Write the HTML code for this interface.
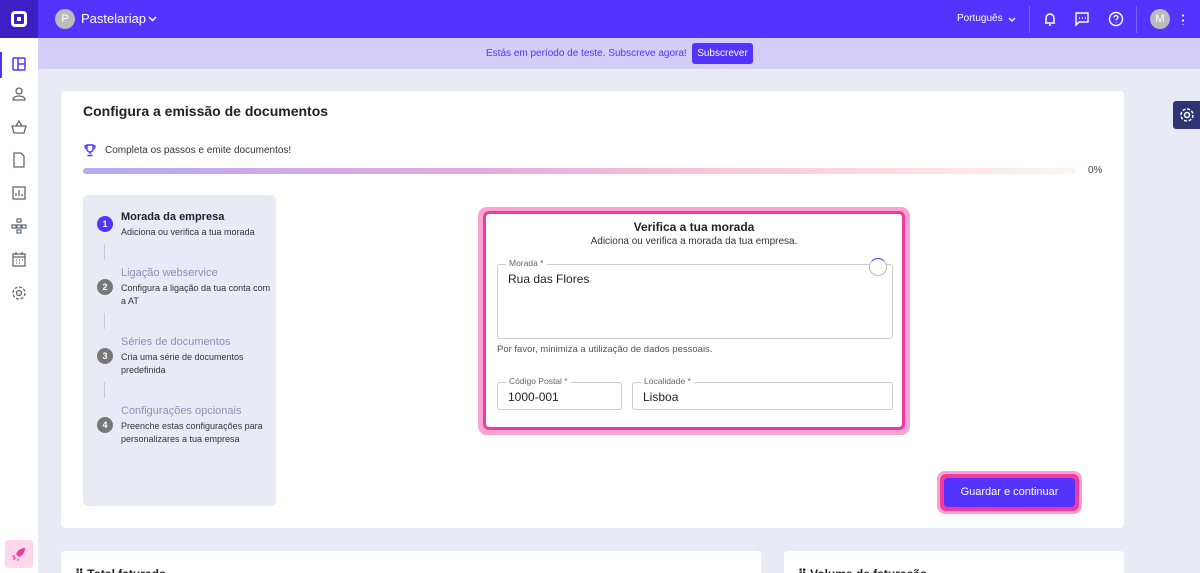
<!DOCTYPE html>
<html style="width:1200px;height:573px;overflow:hidden"><head><meta charset="utf-8"><style>
*{box-sizing:border-box;margin:0;padding:0}
body{width:1200px;height:573px;overflow:hidden;background:#e8eaf6;font-family:"Liberation Sans",sans-serif;position:relative;color:#222}
.abs{position:absolute}
.top{left:0;top:0;width:1200px;height:38px;background:#5533ff}
.logo{left:0;top:0;width:38px;height:38px;background:#3d1fc4}
.side{left:0;top:38px;width:38px;height:535px;background:#fff}
.banner{left:38px;top:38px;width:1162px;height:31px;background:#d3cdf7}
.card{background:#fff;border-radius:4px}
.ic{position:absolute;left:11px;width:16px;height:16px}
.step{position:absolute;left:14px}
.num{position:absolute;left:0;width:16px;height:16px;border-radius:50%;background:#777;color:#fff;font-size:9px;text-align:center;line-height:16px;font-weight:bold}
.st{position:absolute;left:24px;font-size:11px;color:#8b90b8;white-space:nowrap}
.sd{position:absolute;left:24px;font-size:9px;color:#333;line-height:13px;width:150px}
.vl{position:absolute;left:7px;width:1px;height:16px;background:#c8c8d6}
.fld{position:absolute;border:1px solid #ccc;border-radius:3px}
.lab{position:absolute;top:-7px;left:8px;background:#fff;padding:0 3px;font-size:8.5px;color:#666}
.val{position:absolute;left:10px;font-size:12px;color:#222}
</style></head><body>
<div class="abs top"></div>
<div class="abs logo"><div style="position:absolute;left:11px;top:11px;width:16px;height:16px;border:3px solid #fff;border-radius:4px"><div style="position:absolute;left:3px;top:3px;width:4px;height:4px;background:#fff"></div></div></div>
<div class="abs" style="left:55px;top:9px;width:20px;height:20px;border-radius:50%;background:#bbb;color:#fff;font-size:11px;text-align:center;line-height:20px">P</div>
<div class="abs" style="left:81px;top:11px;color:#fff;font-size:13px">Pastelariap</div>
<svg class="abs" style="left:148px;top:16px" width="9" height="6"><path d="M1 1l3.5 3.5L8 1" stroke="#fff" stroke-width="1.5" fill="none"/></svg>
<div class="abs" style="left:957px;top:13px;color:#fff;font-size:10px">Português</div>
<svg class="abs" style="left:1008px;top:17px" width="8" height="5"><path d="M1 1l3 3 3-3" stroke="#fff" stroke-width="1.3" fill="none"/></svg>
<div class="abs" style="left:1029px;top:6px;width:1px;height:27px;background:#7a60ff"></div>
<svg class="abs" style="left:1042px;top:11px" width="16" height="16" fill="none" stroke="#fff" stroke-width="1.5"><path d="M4 12V7a4 4 0 018 0v5H3h10M7 14h2"/></svg>
<svg class="abs" style="left:1074px;top:11px" width="16" height="16" fill="none" stroke="#fff" stroke-width="1.4"><path d="M2 2h12v9H5l-3 3z"/><path d="M5 7h1M8 7h1M11 7h1"/></svg>
<svg class="abs" style="left:1108px;top:11px" width="16" height="16" fill="none" stroke="#fff" stroke-width="1.4"><circle cx="8" cy="8" r="6.5"/><path d="M6 6.5a2 2 0 114 0c0 1.5-2 1.5-2 3M8 11.5v.5"/></svg>
<div class="abs" style="left:1136px;top:6px;width:1px;height:27px;background:#7a60ff"></div>
<div class="abs" style="left:1150px;top:9px;width:20px;height:20px;border-radius:50%;background:#bbb;color:#fff;font-size:11px;text-align:center;line-height:20px">M</div>
<div class="abs" style="left:1182px;top:13px;width:2px;height:12px;background:radial-gradient(circle,#fff 1px,transparent 1.2px) 0 0/2px 5px"></div>

<div class="abs side"></div>
<div class="abs" style="left:0;top:52px;width:2px;height:26px;background:#5533ff"></div>
<svg class="ic" style="top:56px" fill="none" stroke="#5533ff" stroke-width="1.5"><rect x="2" y="2" width="12" height="12" rx="1"/><path d="M7 2v12M7 8h7"/></svg>
<svg class="ic" style="top:86px" fill="none" stroke="#667" stroke-width="1.3"><circle cx="8" cy="5" r="3"/><path d="M2 14c0-3 3-4 6-4s6 1 6 4z"/></svg>
<svg class="ic" style="top:119px" fill="none" stroke="#667" stroke-width="1.3"><path d="M1 7h14l-2 7H3zM5 7l3-5 3 5"/></svg>
<svg class="ic" style="top:152px" fill="none" stroke="#667" stroke-width="1.3"><path d="M3 1h7l3 3v11H3z"/></svg>
<svg class="ic" style="top:185px" fill="none" stroke="#667" stroke-width="1.3"><rect x="2" y="2" width="12" height="12"/><path d="M5 11V8M8 11V5M11 11V9"/></svg>
<svg class="ic" style="top:218px" fill="none" stroke="#667" stroke-width="1.2"><rect x="6" y="1" width="4" height="3"/><rect x="1" y="7" width="4" height="3"/><rect x="6" y="7" width="4" height="3"/><rect x="11" y="7" width="4" height="3"/><rect x="6" y="12" width="4" height="3"/></svg>
<svg class="ic" style="top:251px" fill="none" stroke="#667" stroke-width="1.3"><rect x="2" y="3" width="12" height="12"/><path d="M2 6h12M5 1v3M11 1v3M5 9h1M8 9h1M11 9h1M5 12h1M8 12h1"/></svg>
<svg class="ic" style="top:285px" fill="none" stroke="#667" stroke-width="1.3"><circle cx="8" cy="8" r="2.5"/><circle cx="8" cy="8" r="6" stroke-dasharray="3 1.7"/></svg>
<div class="abs" style="left:5px;top:540px;width:28px;height:28px;background:#ffd6ec;border-radius:3px"></div>
<svg class="abs" style="left:11px;top:546px" width="16" height="16" fill="#f03a9a"><path d="M14 2c-4 0-7 2-9 6l3 3c4-2 6-5 6-9zM4 9l-3 1 2 2zM7 12l-1 3 2-1zM2 13l2-2 1 1-2 2z"/></svg>

<div class="abs banner"></div>
<div class="abs" style="left:486px;top:48px;font-size:10px;color:#5533ff">Estás em período de teste. Subscreve agora!</div>
<div class="abs" style="left:692px;top:43px;width:61px;height:21px;background:#5533ff;border-radius:3px;color:#fff;font-size:10px;text-align:center;line-height:21px">Subscrever</div>

<div class="abs" style="left:1173px;top:101px;width:27px;height:28px;background:#2e3572;border-radius:3px 0 0 3px"></div>
<svg class="abs" style="left:1179px;top:107px" width="16" height="16" fill="none" stroke="#fff" stroke-width="1.5"><circle cx="8" cy="8" r="2.5"/><circle cx="8" cy="8" r="6" stroke-dasharray="3 1.7"/></svg>

<div class="abs card" style="left:61px;top:91px;width:1063px;height:437px"></div>
<div class="abs" style="left:83px;top:103px;font-size:14px;font-weight:bold;color:#222">Configura a emissão de documentos</div>
<svg class="abs" style="left:83px;top:143px" width="14" height="14" fill="none" stroke="#5533ff" stroke-width="1.4"><path d="M4 2h6v4a3 3 0 01-6 0zM4 3H2c0 2 1 3 2 3M10 3h2c0 2-1 3-2 3M7 9v2M4.5 12.5h5"/></svg>
<div class="abs" style="left:105px;top:145px;font-size:10px;color:#333">Completa os passos e emite documentos!</div>
<div class="abs" style="left:83px;top:168px;width:993px;height:6px;border-radius:3px;background:linear-gradient(90deg,#b7a9f6,#e6aadf 40%,#fbc6d9 65%,#fdf5ea)"></div>
<div class="abs" style="left:1088px;top:165px;font-size:10px;color:#444">0%</div>

<div class="abs" style="left:83px;top:195px;width:193px;height:311px;background:#e8eaf6;border-radius:5px">
 <div class="step" style="top:21px;width:170px">
  <div class="num" style="top:0;background:#5533ff">1</div>
  <div class="st" style="top:-5px;color:#222;font-weight:bold">Morada da empresa</div>
  <div class="sd" style="top:10px">Adiciona ou verifica a tua morada</div>
 </div>
 <div class="vl" style="left:21px;top:49px"></div>
 <div class="step" style="top:84px;width:170px">
  <div class="num" style="top:0">2</div>
  <div class="st" style="top:-12px">Ligação webservice</div>
  <div class="sd" style="top:3px">Configura a ligação da tua conta com a AT</div>
 </div>
 <div class="vl" style="left:21px;top:118px"></div>
 <div class="step" style="top:153px;width:170px">
  <div class="num" style="top:0">3</div>
  <div class="st" style="top:-12px">Séries de documentos</div>
  <div class="sd" style="top:3px">Cria uma série de documentos predefinida</div>
 </div>
 <div class="vl" style="left:21px;top:187px"></div>
 <div class="step" style="top:222px;width:170px">
  <div class="num" style="top:0">4</div>
  <div class="st" style="top:-12px">Configurações opcionais</div>
  <div class="sd" style="top:3px">Preenche estas configurações para personalizares a tua empresa</div>
 </div>
</div>

<div class="abs" style="left:478px;top:207px;width:432px;height:228px;border-radius:9px;background:#f9a3d3"></div>
<div class="abs" style="left:483px;top:211px;width:422px;height:219px;border-radius:6px;border:3px solid #f2399f;background:#fff">
 <div style="position:absolute;left:0;right:0;top:6px;text-align:center;font-size:12px;font-weight:bold">Verifica a tua morada</div>
 <div style="position:absolute;left:0;right:0;top:22px;text-align:center;font-size:10px;color:#333">Adiciona ou verifica a morada da tua empresa.</div>
 <div class="fld" style="left:11px;top:50px;width:396px;height:75px"><div class="lab">Morada *</div><div class="val" style="top:7px">Rua das Flores</div>
  <div style="position:absolute;right:5px;top:-7px;width:18px;height:18px;border-radius:50%;border:1px solid #bbb;background:#fff;border-top-color:#5533ff"></div></div>
 <div style="position:absolute;left:11px;top:130px;font-size:9.5px;color:#555">Por favor, minimiza a utilização de dados pessoais.</div>
 <div class="fld" style="left:11px;top:168px;width:125px;height:28px"><div class="lab">Código Postal *</div><div class="val" style="top:7px">1000-001</div></div>
 <div class="fld" style="left:146px;top:168px;width:261px;height:28px"><div class="lab">Localidade *</div><div class="val" style="top:7px">Lisboa</div></div>
</div>

<div class="abs" style="left:937px;top:471px;width:145px;height:43px;border-radius:8px;background:#f9a3d3"></div>
<div class="abs" style="left:940px;top:474px;width:139px;height:37px;border-radius:6px;background:#f2399f"></div>
<div class="abs" style="left:944px;top:478px;width:131px;height:29px;border-radius:4px;background:#5533ff;color:#fff;font-size:11px;text-align:center;line-height:29px">Guardar e continuar</div>

<div class="abs card" style="left:61px;top:551px;width:700px;height:22px;border-radius:4px 4px 0 0"></div>
<div class="abs card" style="left:784px;top:551px;width:340px;height:22px;border-radius:4px 4px 0 0"></div>
<div class="abs" style="left:75px;top:567px;font-size:12px;font-weight:bold;color:#222">⠿ Total faturado</div>
<div class="abs" style="left:798px;top:567px;font-size:12px;font-weight:bold;color:#222">⠿ Volume de faturação</div>
</body></html>
